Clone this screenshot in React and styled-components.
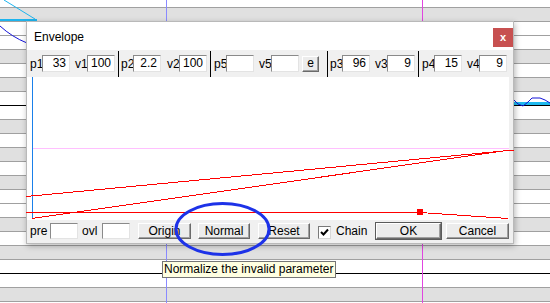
import React from "react";
import styled, { createGlobalStyle } from "styled-components";

const GlobalStyle = createGlobalStyle`
  html, body { margin: 0; padding: 0; }
  body {
    font-family: "Liberation Sans", Arial, sans-serif;
    font-size: 12px;
    color: #000;
    background: #fff;
  }
`;

const Page = styled.div`
  position: relative;
  width: 550px;
  height: 303px;
  overflow: hidden;
`;

// piano roll rows behind the dialog
const Roll = styled.div`
  display: flex;
  flex-direction: column;
  margin-top: -7px;
`;

const Row = styled.div`
  box-sizing: border-box;
  height: 14px;
  flex: none;
  border-top: 1px solid ${(p) => (p.$octave ? "#000" : "#a0a0a0")};
  background: ${(p) => (p.$black ? "#e0e0e0" : "#fff")};
`;

const Track = styled.svg`
  position: absolute;
  left: 0;
  top: 0;
`;

const Dialog = styled.div`
  position: absolute;
  left: 26px;
  top: 21px;
  width: 488px;
  height: 223px;
  box-sizing: border-box;
  border: 1px solid #b9b9b9;
  background: #f0f0f0;
  box-shadow: 1px 2px 6px rgba(0, 0, 0, 0.28);
  display: flex;
  flex-direction: column;
`;

const TitleBar = styled.div`
  height: 28px;
  flex: none;
  background: #fff;
  display: flex;
  align-items: center;
  padding-left: 7px;
`;

const Title = styled.span`
  font-size: 12px;
  margin-top: 1px;
`;

const Close = styled.div`
  align-self: flex-start;
  margin: 6px 0 0 auto;
  width: 20px;
  height: 19px;
  background: #c75050;
  color: #fff;
  font-weight: bold;
  font-size: 11px;
  display: flex;
  align-items: center;
  justify-content: center;
  padding-bottom: 2px;
  box-sizing: border-box;
`;

const Toolbar = styled.div`
  height: 27px;
  flex: none;
  display: flex;
  align-items: center;
  padding-left: 3px;
`;

const Label = styled.span`
  width: ${(p) => p.$w || 12}px;
  margin-left: ${(p) => p.$ml || 0}px;
  flex: none;
  white-space: nowrap;
  font-size: 12px;
  line-height: 14px;
`;

const Field = styled.input`
  box-sizing: border-box;
  width: 28px;
  height: ${(p) => p.$h || 17}px;
  flex: none;
  margin: 0;
  padding: 0 3px 1px 0;
  border: 1px solid;
  border-color: #8a8a8a #e3e3e3 #e3e3e3 #8a8a8a;
  background: #fff;
  font-family: "Liberation Sans", Arial, sans-serif;
  font-size: 12px;
  text-align: right;
  outline: none;
`;

const Separator = styled.div`
  align-self: stretch;
  width: 1px;
  flex: none;
  margin: 1px 0 0 ${(p) => p.$ml}px;
  background: #000;
`;

const Button = styled.div`
  box-sizing: border-box;
  width: ${(p) => p.$w}px;
  height: ${(p) => p.$h || 16}px;
  margin-left: ${(p) => p.$ml || 0}px;
  flex: none;
  display: flex;
  align-items: center;
  justify-content: center;
  font-size: 12px;
  background: #ececec;
  border: 1px solid;
  border-color: #fff #6a6a6a #6a6a6a #fff;
  box-shadow: ${(p) =>
    p.$default
      ? "0 0 0 1px #5a5a5a, inset -1px -1px #a0a0a0"
      : "inset -1px -1px #a0a0a0"};
  padding-bottom: 1px;
`;

const Plot = styled.svg`
  display: block;
  flex: none;
  overflow: visible;
`;

const BottomBar = styled.div`
  height: 23px;
  flex: none;
  display: flex;
  align-items: flex-start;
  padding: 3px 0 0 3px;
  box-sizing: border-box;
`;

const Check = styled.div`
  box-sizing: border-box;
  width: 13px;
  height: 13px;
  margin: 3px 0 0 ${(p) => p.$ml}px;
  flex: none;
  background: #fff;
  border: 1px solid;
  border-color: #7a7a7a #d8d8d8 #d8d8d8 #7a7a7a;
  display: flex;
  align-items: center;
  justify-content: center;
`;

const BarText = styled.span`
  width: ${(p) => p.$w}px;
  margin-left: ${(p) => p.$ml || 0}px;
  flex: none;
  font-size: 12px;
  line-height: 16px;
`;

const Tip = styled.div`
  position: absolute;
  left: 162px;
  top: 261px;
  height: 17px;
  box-sizing: border-box;
  padding: 0 2px 0 1px;
  border: 1px solid #767676;
  background: #ffffe1;
  font-size: 12px;
  line-height: 15px;
  white-space: nowrap;
`;

const Mark = styled.svg`
  position: absolute;
  left: 170px;
  top: 198px;
  overflow: visible;
`;

const NOTES = [
  "G", "F#", "F", "E", "D#", "D", "C#", "C",
  "B", "A#", "A", "G#", "G", "F#", "F", "E", "D#", "D", "C#", "C",
  "B", "A#", "A",
];

const TOP = [
  { name: "p1", value: "33", ml: 0 },
  { name: "v1", value: "100", ml: 5 },
  { sep: 3 },
  { name: "p2", value: "2.2", ml: 2 },
  { name: "v2", value: "100", ml: 6 },
  { sep: 3 },
  { name: "p5", value: "", ml: 3 },
  { name: "v5", value: "", ml: 5 },
  { button: "e", ml: 3 },
  { sep: 8 },
  { name: "p3", value: "96", ml: 2 },
  { name: "v3", value: "9", ml: 5 },
  { sep: 3 },
  { name: "p4", value: "15", ml: 3 },
  { name: "v4", value: "9", ml: 5 },
];

const Background = () => (
  <Track width="550" height="303">
    <line x1="166.5" y1="0" x2="166.5" y2="303" stroke="#8a8aff" />
    <line x1="422.5" y1="0" x2="422.5" y2="303" stroke="#e045e0" />
    <line x1="4" y1="0" x2="35" y2="19" stroke="#1eb4ee" />
    <rect x="0" y="19" width="37" height="2" fill="#1eb4ee" />
    <path d="M0 26 Q 12 37 27 43" fill="none" stroke="#1414d8" />
    <rect x="514" y="102" width="36" height="3" fill="#1eb9ee" />
    <polyline
      points="514,100 518,104 523,106 528,102 532,98 540,98 545,100 550,103"
      fill="none"
      stroke="#1414d8"
    />
  </Track>
);

const Envelope = () => (
  <Plot width="486" height="143" shapeRendering="crispEdges">
    <rect x="0" y="0" width="482" height="143" fill="#fff" />
    <line x1="5" y1="71.5" x2="482" y2="71.5" stroke="#ffc0ff" />
    <line x1="5.5" y1="0" x2="5.5" y2="142" stroke="#1a80ea" />
    <line x1="-1" y1="119.5" x2="487" y2="73" stroke="#f00" />
    <line x1="5" y1="141.5" x2="483" y2="73" stroke="#f00" />
    <polyline
      points="-1,135.5 393,135.5 481,141.5"
      fill="none"
      stroke="#f00"
    />
    <rect x="390" y="132" width="6" height="6" fill="#f00" />
  </Plot>
);

const Checkmark = () => (
  <svg width="9" height="9" viewBox="0 0 9 9">
    <path d="M1 4 L3.5 6.5 L8 1.5" fill="none" stroke="#000" strokeWidth="2" />
  </svg>
);

export default function App() {
  return (
    <Page>
      <GlobalStyle />
      <Roll>
        {NOTES.map((n, i) => (
          <Row key={i} $black={n.includes("#")} $octave={n === "B"} />
        ))}
      </Roll>
      <Background />

      <Dialog>
        <TitleBar>
          <Title>Envelope</Title>
          <Close>x</Close>
        </TitleBar>

        <Toolbar>
          {TOP.map((item, i) => {
            if (item.sep) return <Separator key={i} $ml={item.sep} />;
            if (item.button)
              return (
                <Button key={i} $w={17} $h={16} $ml={item.ml}>
                  {item.button}
                </Button>
              );
            return (
              <React.Fragment key={i}>
                <Label $ml={item.ml}>{item.name}</Label>
                <Field readOnly value={item.value} />
              </React.Fragment>
            );
          })}
        </Toolbar>

        <Envelope />

        <BottomBar>
          <BarText $w={20}>pre</BarText>
          <Field readOnly value="" $h={16} />
          <BarText $w={20} $ml={4}>ovl</BarText>
          <Field readOnly value="" $h={16} />
          <Button $w={53} $ml={8}>Origin</Button>
          <Button $w={52} $ml={7}>Normal</Button>
          <Button $w={52} $ml={8}>Reset</Button>
          <Check $ml={8}>
            <Checkmark />
          </Check>
          <BarText $w={40} $ml={5}>Chain</BarText>
          <Button $w={65} $default>OK</Button>
          <Button $w={63} $ml={5}>Cancel</Button>
        </BottomBar>
      </Dialog>

      <Tip>Normalize the invalid parameter</Tip>

      <Mark width="106" height="62">
        <ellipse cx="52.5" cy="31" rx="46.5" ry="25.5" fill="none" stroke="#1d32e8" strokeWidth="3" />
      </Mark>
    </Page>
  );
}
